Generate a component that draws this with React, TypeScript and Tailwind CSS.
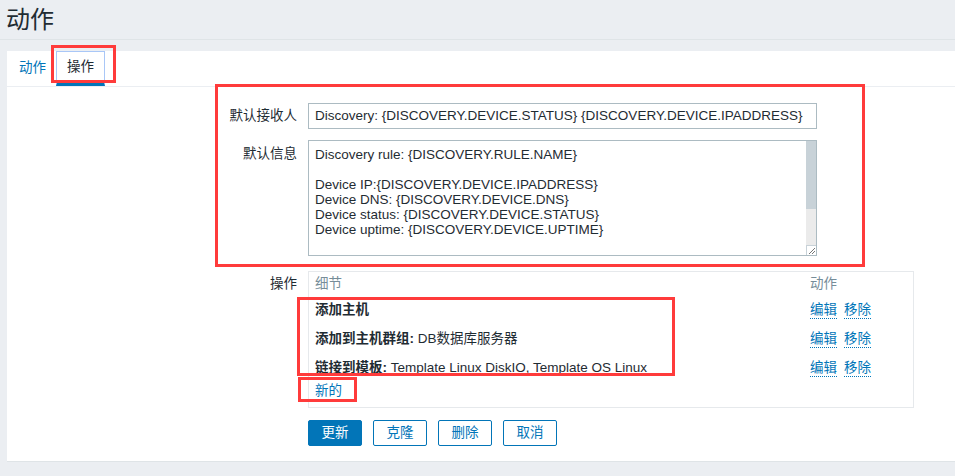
import React from 'react';

const messageLines = [
  'Discovery rule: {DISCOVERY.RULE.NAME}',
  '',
  'Device IP:{DISCOVERY.DEVICE.IPADDRESS}',
  'Device DNS: {DISCOVERY.DEVICE.DNS}',
  'Device status: {DISCOVERY.DEVICE.STATUS}',
  'Device uptime: {DISCOVERY.DEVICE.UPTIME}',
  '',
  'Device service name: {DISCOVERY.SERVICE.NAME}',
];

const operations = [
  { title: '添加主机', detail: '' },
  { title: '添加到主机群组:', detail: ' DB数据库服务器' },
  { title: '链接到模板:', detail: ' Template Linux DiskIO, Template OS Linux' },
];

const RowActions = () => (
  <div className="flex gap-[7px] text-[#0275b8]">
    <span className="leading-[16px] border-b border-dotted border-[#0275b8]">编辑</span>
    <span className="leading-[16px] border-b border-dotted border-[#0275b8]">移除</span>
  </div>
);

const App: React.FC = () => {
  return (
    <div className="relative w-[955px] h-[476px] overflow-hidden bg-[#ebeef2] text-[13.5px] text-[#1f2c33] font-['Liberation_Sans','Noto_Sans_CJK_SC',sans-serif]">
      <header className="h-[40px] border-b border-[#dfe4e7] px-[6px] flex items-center">
        <h1 className="text-[24px] leading-none font-normal">动作</h1>
      </header>

      <div className="mt-[11px] ml-[7px] bg-white border-b border-[#dfe4e7] pb-[15px]">
        {/* tabs */}
        <div className="flex h-[36px] border-b border-[#ebeef2]">
          <div className="pl-[12px] pr-[10px] flex items-center text-[#0275b8]">动作</div>
          <div className="px-[10px] flex items-center border border-[#a9c7f7] border-b-[3px] border-b-[#0275b8]">操作</div>
        </div>

        <div className="pt-[16px]">
          {/* default subject */}
          <div className="flex items-center">
            <label className="w-[290px] text-right leading-[16px]">默认接收人</label>
            <div className="ml-[11px] w-[509px] h-[26px] border border-[#acbbc2] px-[6px] flex items-center whitespace-nowrap overflow-hidden">
              Discovery: {'{DISCOVERY.DEVICE.STATUS}'} {'{DISCOVERY.DEVICE.IPADDRESS}'}
            </div>
          </div>

          {/* default message */}
          <div className="flex mt-[11px]">
            <label className="w-[290px] text-right leading-[16px] pt-[6px]">默认信息</label>
            <div className="ml-[11px] w-[509px] h-[116px] border border-[#acbbc2] flex overflow-hidden">
              <div className="flex-1 pl-[6px] pt-[6px] leading-[15px] whitespace-pre overflow-hidden">
                {messageLines.map((l, i) => (
                  <div key={i} className="h-[15px]">{l}</div>
                ))}
              </div>
              <div className="w-[10px] flex flex-col bg-[#ebebeb]">
                <div className="h-[68px] bg-[#c8d2d8]" />
                <div className="flex-1" />
                <div className="h-[10px] bg-white border-l border-t border-[#c8d2d8] flex items-center justify-center">
                  <svg width="8" height="8" viewBox="0 0 8 8">
                    <path d="M7 1L1 7M7 4L4 7" stroke="#777" strokeWidth="1" />
                  </svg>
                </div>
              </div>
            </div>
          </div>

          {/* operations */}
          <div className="flex mt-[15px]">
            <label className="w-[290px] text-right leading-[16px] pt-[5px]">操作</label>
            <div className="ml-[11px] w-[606px] h-[137px] border border-[#e6e9ec] pl-[6px]">
              <div className="grid grid-cols-[495px_1fr] h-[24px] items-center text-[#768d99]">
                <div>细节</div>
                <div>动作</div>
              </div>
              {operations.map((op, i) => (
                <div key={i} className="grid grid-cols-[495px_1fr] h-[29px] items-center">
                  <div className="whitespace-nowrap">
                    <span className="font-bold">{op.title}</span>
                    {op.detail}
                  </div>
                  <RowActions />
                </div>
              ))}
              <div className="h-[16px] flex items-center text-[#0275b8]">新的</div>
            </div>
          </div>

          {/* buttons */}
          <div className="flex gap-[11px] mt-[12px] ml-[301px]">
            <button className="w-[54px] h-[26px] rounded-[2px] bg-[#0275b8] text-white border border-[#0275b8]">更新</button>
            <button className="w-[54px] h-[26px] rounded-[2px] bg-white text-[#0275b8] border border-[#0275b8]">克隆</button>
            <button className="w-[54px] h-[26px] rounded-[2px] bg-white text-[#0275b8] border border-[#0275b8]">删除</button>
            <button className="w-[54px] h-[26px] rounded-[2px] bg-white text-[#0275b8] border border-[#0275b8]">取消</button>
          </div>
        </div>
      </div>

      {/* red annotation boxes */}
      <div className="absolute left-[51px] top-[45px] w-[65px] h-[38px] border-[3px] border-[#ff3b3b] pointer-events-none" />
      <div className="absolute left-[215px] top-[84px] w-[650px] h-[183px] border-[3px] border-[#ff3b3b] pointer-events-none" />
      <div className="absolute left-[297px] top-[297px] w-[378px] h-[79px] border-[3px] border-[#ff3b3b] pointer-events-none" />
      <div className="absolute left-[298px] top-[377px] w-[59px] h-[25px] border-[3px] border-[#ff3b3b] pointer-events-none" />
    </div>
  );
};

export default App;
